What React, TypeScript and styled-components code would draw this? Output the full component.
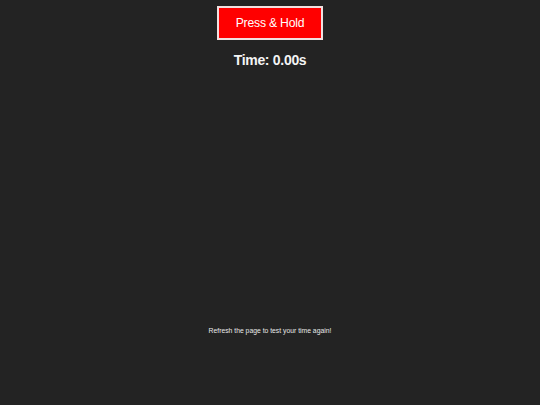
import React from "react";
import styled, { createGlobalStyle } from "styled-components";

const Global = createGlobalStyle`
  html, body { margin: 0; padding: 0; background: #232323; }
  body { font-family: "Liberation Sans", Arial, sans-serif; color: #fff; }
`;

const Page = styled.div`
  width: 540px;
  height: 405px;
  display: flex;
  flex-direction: column;
  align-items: center;
  padding-top: 6px;
  box-sizing: border-box;
`;

const HoldButton = styled.button`
  width: 106px;
  height: 34px;
  background: #ff0000;
  color: #fff;
  border: 2px solid #f0e0e0;
  font-family: "Liberation Sans", Arial, sans-serif;
  font-size: 12.2px;
  letter-spacing: -0.2px;
  padding: 0;
  cursor: pointer;
`;

const Timer = styled.div`
  margin-top: 12px;
  font-size: 14px;
  letter-spacing: -0.3px;
  font-weight: bold;
  color: #f4f4f4;
  line-height: 16px;
`;

const Note = styled.div`
  margin-top: 259px;
  font-size: 6.8px;
  color: #e8e8e8;
  line-height: 8px;
`;

export default function App() {
  return (
    <>
      <Global />
      <Page>
        <HoldButton>Press &amp; Hold</HoldButton>
        <Timer>Time: 0.00s</Timer>
        <Note>Refresh the page to test your time again!</Note>
      </Page>
    </>
  );
}
